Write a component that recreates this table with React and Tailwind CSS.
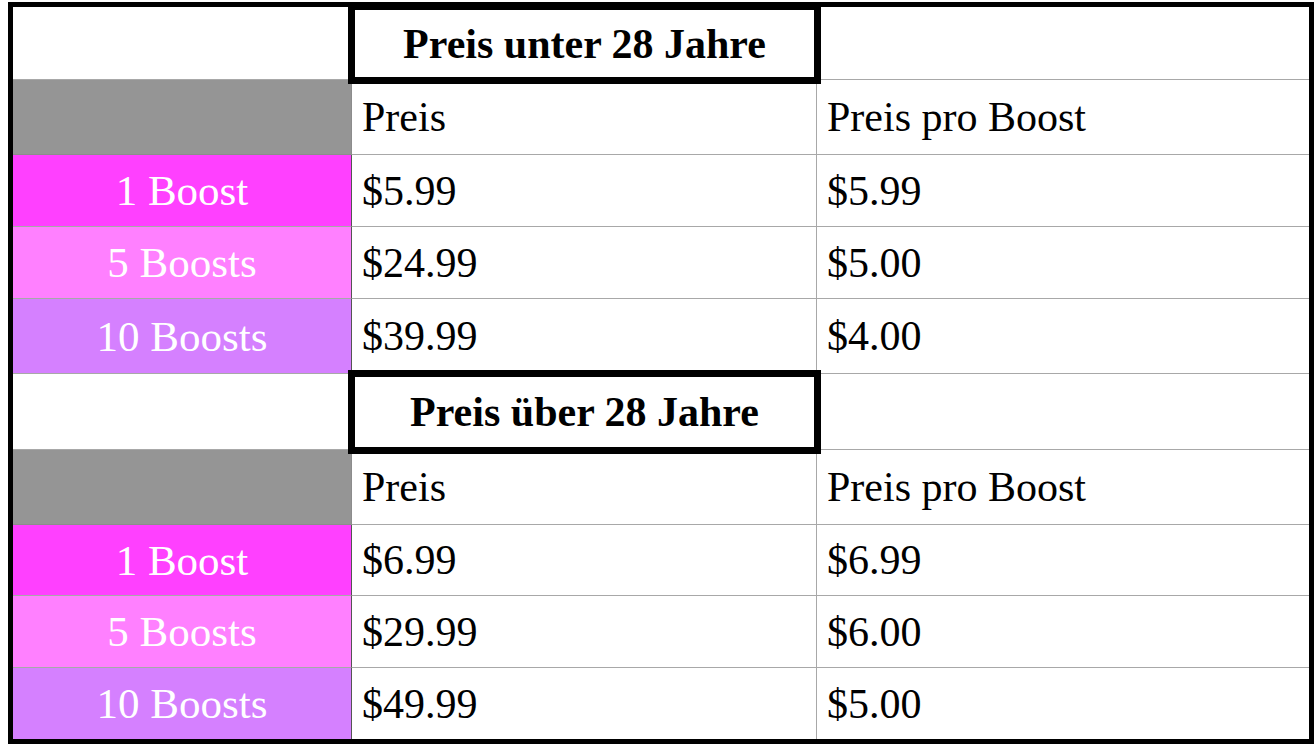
const groups = [
  {
    title: "Preis unter 28 Jahre",
    rows: [
      { label: "1 Boost", bg: "bg-[#ff40ff]", price: "$5.99", per: "$5.99" },
      { label: "5 Boosts", bg: "bg-[#ff80ff]", price: "$24.99", per: "$5.00" },
      { label: "10 Boosts", bg: "bg-[#d580ff]", price: "$39.99", per: "$4.00" },
    ],
  },
  {
    title: "Preis über 28 Jahre",
    rows: [
      { label: "1 Boost", bg: "bg-[#ff40ff]", price: "$6.99", per: "$6.99" },
      { label: "5 Boosts", bg: "bg-[#ff80ff]", price: "$29.99", per: "$6.00" },
      { label: "10 Boosts", bg: "bg-[#d580ff]", price: "$49.99", per: "$5.00" },
    ],
  },
];

const line = "border-[#a8a8a8]";

export default function App() {
  return (
    <div className="bg-white w-[1314px] h-[744px] pt-[2px] pl-[8px] font-['Liberation_Serif','Times_New_Roman',serif] text-black">
      <div className="w-[1306px] h-[742px] border-[5px] border-black grid grid-cols-[339px_465px_1fr] grid-rows-[73px_75px_72px_72px_75px_76px_75px_71px_72px_71px]">
        {groups.map((group, gi) => (
          <Group key={group.title} group={group} last={gi === groups.length - 1} />
        ))}
      </div>
    </div>
  );
}

function Group({ group, last }) {
  return (
    <>
      <div className={`bg-white border-b ${line}`} />
      <div className="relative z-10 -mx-[4px] -my-[4px] border-[7px] border-black bg-white flex items-center justify-center">
        <span className="text-[42px] font-bold leading-none">{group.title}</span>
      </div>
      <div className={`bg-white border-b ${line}`} />

      <div className={`bg-[#959595] border-b border-r border-[#8c8c8c]`} />
      <Cell className="border-r">Preis</Cell>
      <Cell>Preis pro Boost</Cell>

      {group.rows.map((row, i) => {
        const isLast = last && i === group.rows.length - 1;
        return (
          <Row key={row.label} row={row} isLast={isLast} />
        );
      })}
    </>
  );
}

function Row({ row, isLast }) {
  return (
    <>
      <div
        className={`${row.bg} flex items-center justify-center border-r border-[#555] ${isLast ? "" : "border-b border-b-[#a8a8a8]"}`}
      >
        <span className="text-[43px] leading-none text-white">{row.label}</span>
      </div>
      <Cell className="border-r" noBottom={isLast}>{row.price}</Cell>
      <Cell noBottom={isLast}>{row.per}</Cell>
    </>
  );
}

function Cell({ children, className = "", noBottom }) {
  return (
    <div className={`flex items-center pl-[10px] bg-white ${line} ${noBottom ? "" : "border-b"} ${className}`}>
      <span className="text-[42px] leading-none">{children}</span>
    </div>
  );
}
